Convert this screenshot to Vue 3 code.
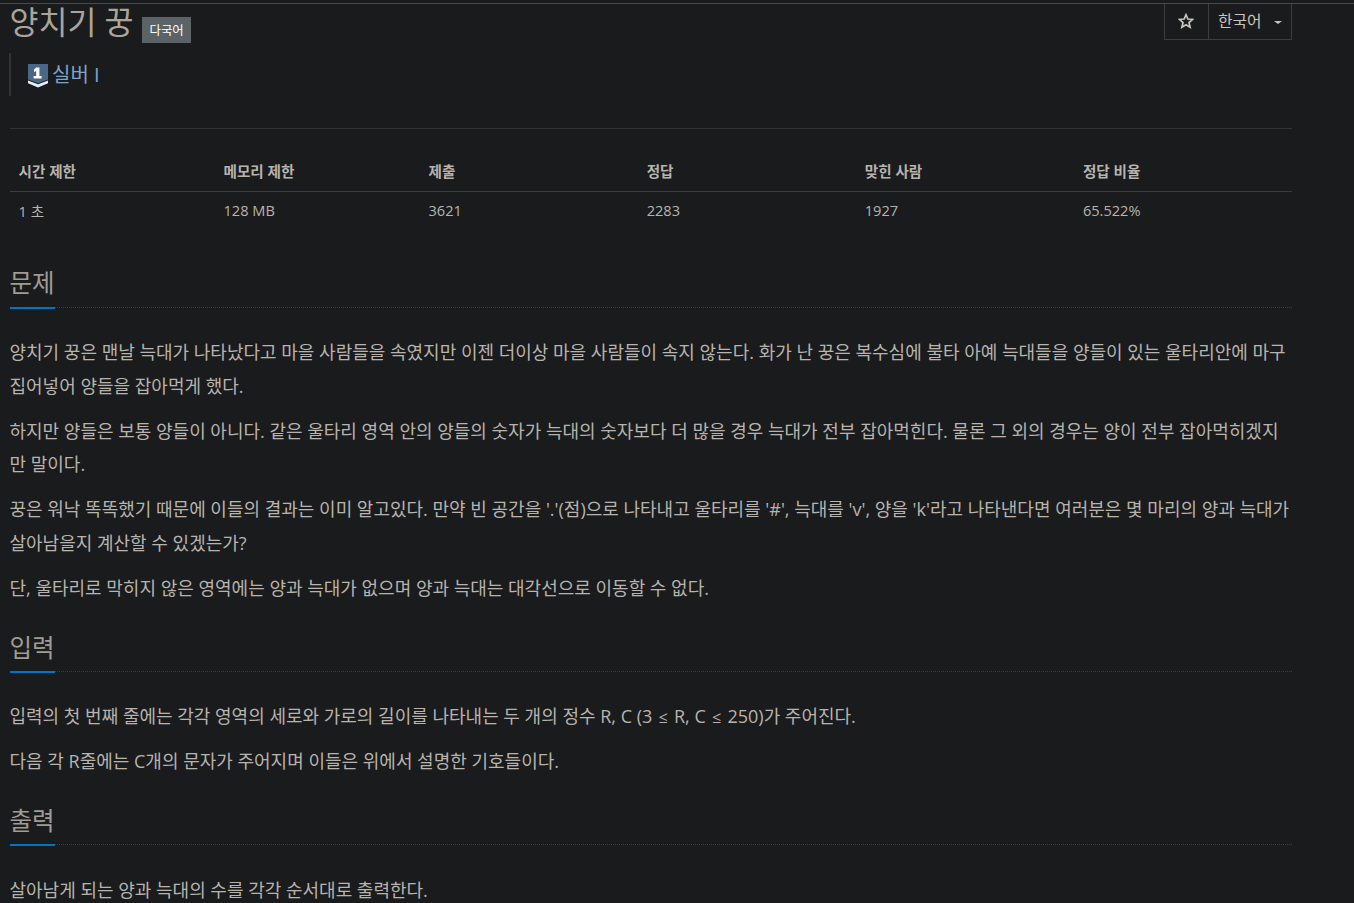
<script setup>
const headers = ['시간 제한', '메모리 제한', '제출', '정답', '맞힌 사람', '정답 비율']
const values = ['1 초', '128 MB', '3621', '2283', '1927', '65.522%']
</script>

<template>
  <div class="page">
    <div class="content">
      <div class="title-row">
        <div class="title-left">
          <h1 class="title">양치기 꿍</h1>
          <span class="label">다국어</span>
        </div>
        <div class="btn-group">
          <div class="btn star">
            <svg width="16" height="16" viewBox="0 0 24 24" fill="none" stroke="#c8c5bf" stroke-width="2.6" stroke-linejoin="miter">
              <path d="M12 2.6l2.8 6.4 7 .7-5.3 4.6 1.6 6.9-6.1-3.6-6.1 3.6 1.6-6.9-5.3-4.6 7-.7z" />
            </svg>
          </div>
          <div class="btn lang">한국어<span class="caret"></span></div>
        </div>
      </div>

      <blockquote class="tier">
        <svg class="tier-icon" width="20" height="24" viewBox="0 0 20 24">
          <path d="M0 0h20v15.6l-10 3.6L0 15.6z" fill="#4a6785" />
          <path d="M0 16.6l10 3.6 10-3.6v2.6l-10 4.4L0 19.2z" fill="#e6edf3" />
          <path d="M8.2 3.6h3.2v8.4h2.2v2.4H5.6V12h2.6V6.9L6 7.9V5.4z" fill="#fff" />
        </svg>
        <span class="tier-name">실버 I</span>
      </blockquote>

      <hr class="rule" />

      <table class="stats">
        <thead>
          <tr><th v-for="h in headers" :key="h">{{ h }}</th></tr>
        </thead>
        <tbody>
          <tr><td v-for="v in values" :key="v">{{ v }}</td></tr>
        </tbody>
      </table>

      <section class="section first">
        <h2 class="heading"><span>문제</span></h2>
        <p>양치기 꿍은 맨날 늑대가 나타났다고 마을 사람들을 속였지만 이젠 더이상 마을 사람들이 속지 않는다. 화가 난 꿍은 복수심에 불타 아예 늑대들을 양들이 있는 울타리안에 마구 집어넣어 양들을 잡아먹게 했다.</p>
        <p>하지만 양들은 보통 양들이 아니다. 같은 울타리 영역 안의 양들의 숫자가 늑대의 숫자보다 더 많을 경우 늑대가 전부 잡아먹힌다. 물론 그 외의 경우는 양이 전부 잡아먹히겠지만 말이다.</p>
        <p>꿍은 워낙 똑똑했기 때문에 이들의 결과는 이미 알고있다. 만약 빈 공간을 '.'(점)으로 나타내고 울타리를 '#', 늑대를 'v', 양을 'k'라고 나타낸다면 여러분은 몇 마리의 양과 늑대가 살아남을지 계산할 수 있겠는가?</p>
        <p>단, 울타리로 막히지 않은 영역에는 양과 늑대가 없으며 양과 늑대는 대각선으로 이동할 수 없다.</p>
      </section>

      <section class="section">
        <h2 class="heading"><span>입력</span></h2>
        <p>입력의 첫 번째 줄에는 각각 영역의 세로와 가로의 길이를 나타내는 두 개의 정수 R, C (3 <span class="le">≤</span> R, C <span class="le">≤</span> 250)가 주어진다.</p>
        <p>다음 각 R줄에는 C개의 문자가 주어지며 이들은 위에서 설명한 기호들이다.</p>
      </section>

      <section class="section">
        <h2 class="heading"><span>출력</span></h2>
        <p>살아남게 되는 양과 늑대의 수를 각각 순서대로 출력한다.</p>
      </section>
    </div>
  </div>
</template>

<style>
html, body { background: #191b1d; overflow: hidden; }
</style>

<style scoped>
.page {
  height: 903px;
  overflow: hidden;
  background: #191b1d;
  box-sizing: border-box;
  font-family: "Open Sans", "Noto Sans CJK KR", sans-serif;
  color: #b8b4ad;
}
.content { width: 1282.5px; margin-left: 9.5px; padding-top: 4px; }
.page::before { content: ""; display: block; height: 1px; margin-top: 3px; margin-bottom: -4px; background: #4a4a4a; }
.title-row { display: flex; justify-content: space-between; align-items: flex-start; height: 43px; }
.title-left { display: flex; align-items: flex-start; }
.title { margin: 0; font-size: 31.5px; font-weight: 400; line-height: 36px; color: #aaa59c; }
.label { margin: 13px 0 0 8.5px; height: 26px; width: 49px; background: #5b6366; color: #fff; font-size: 12.4px; line-height: 28px; text-align: center; }
.btn-group { display: flex; height: 35px; border: 1px solid #3d3d3d; border-top: 0; }
.btn { display: flex; align-items: center; justify-content: center; color: #c8c5bf; font-size: 15.8px; padding-bottom: 2px; box-sizing: border-box; }
.star { width: 44px; border-right: 1px solid #3d3d3d; padding-right: 1px; }
.lang { width: 82px; justify-content: flex-start; padding-left: 9px; }
.caret { margin-left: 12px; margin-top: 3px; border-top: 3.5px solid #c8c5bf; border-left: 4px solid transparent; border-right: 4px solid transparent; }
.tier { margin: 6px 0 0 -0.5px; height: 43px; border-left: 2px solid #333; padding-left: 17px; display: flex; align-items: center; }
.tier-icon { flex: none; margin-top: 3px; }
.tier-name { margin-left: 4px; font-size: 20px; color: #7ea4cb; line-height: 26px; }
.rule { margin: 32px 0 0; border: 0; border-top: 1px solid #333; }
.stats { width: 100%; margin-top: 22px; border-collapse: collapse; table-layout: fixed; font-size: 14.6px; }
.stats th, .stats td { box-sizing: border-box; }
.stats th:nth-child(1), .stats th:nth-child(2) { width: 205px; }
.stats th { text-align: left; padding: 0 9px; height: 40px; font-weight: 700; color: #b8b4ad; border-bottom: 1px solid #3d3d3d; }
.stats td { padding: 0 9px 1px; height: 39px; color: #b8b4ad; }
.section { margin-top: 25.75px; }
.section.first { margin-top: 37px; }
.heading { margin: 0 0 28.2px; font-size: 24.5px; font-weight: 400; line-height: 32px; color: #a09c94; border-bottom: 1px dotted #3d3d3d; height: 39.5px; }
.first .heading { margin-bottom: 28.45px; }
.heading span { display: inline-block; height: 39.5px; border-bottom: 2px solid #0076c0; }
p { margin: 0 0 11.25px; font-size: 18px; line-height: 33.75px; color: #b8b4ad; }
.le { font-size: 16px; line-height: 1; margin: 0 1.6px; }
</style>
